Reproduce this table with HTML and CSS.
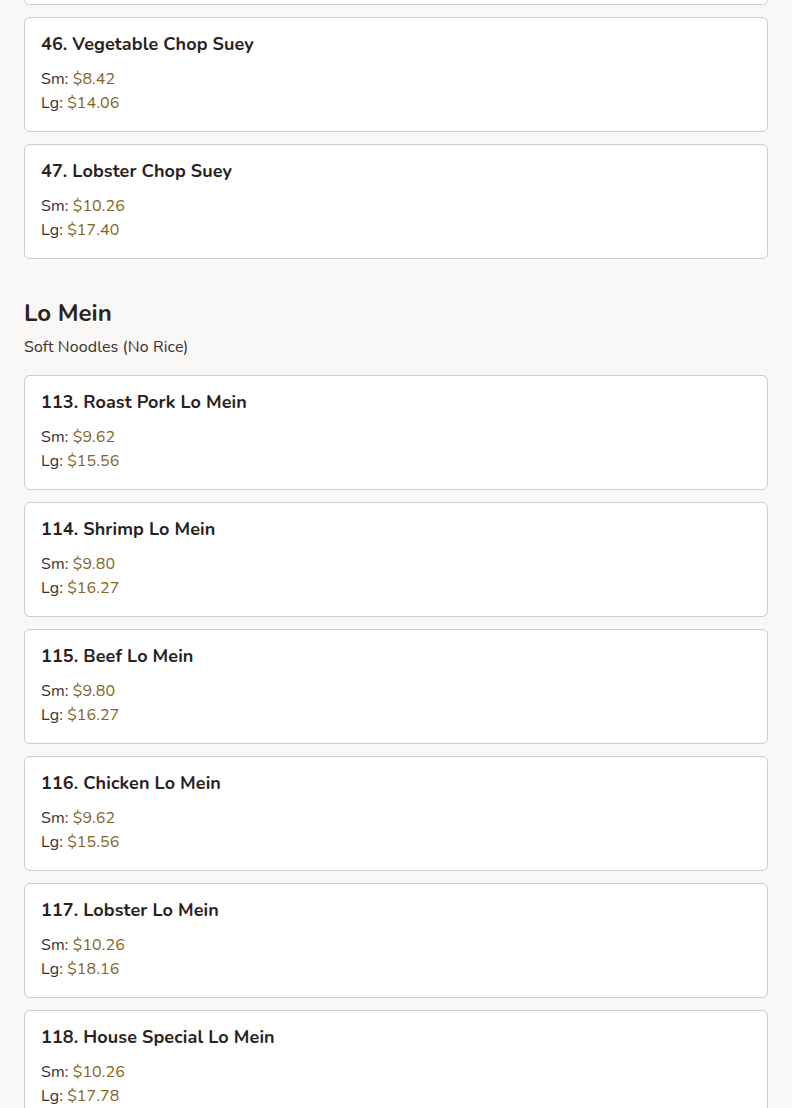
FILE: index.html
```html
<!DOCTYPE html>
<html lang="en">
<head>
<meta charset="utf-8">
<title>Menu</title>
<link rel="stylesheet" href="styles.css">
</head>
<body>
<main class="menu">
  <section class="section">
    <div class="card-tail"></div>
    <div class="cards">
      <article class="card">
        <h3 class="item-name">46. Vegetable Chop Suey</h3>
        <div class="price-row">Sm: <span class="price">$8.42</span></div>
        <div class="price-row">Lg: <span class="price">$14.06</span></div>
      </article>
      <article class="card">
        <h3 class="item-name">47. Lobster Chop Suey</h3>
        <div class="price-row">Sm: <span class="price">$10.26</span></div>
        <div class="price-row">Lg: <span class="price">$17.40</span></div>
      </article>
    </div>
  </section>
  <section class="section section-lomein">
    <h2 class="section-title">Lo Mein</h2>
    <p class="section-desc">Soft Noodles (No Rice)</p>
    <div class="cards">
      <article class="card">
        <h3 class="item-name">113. Roast Pork Lo Mein</h3>
        <div class="price-row">Sm: <span class="price">$9.62</span></div>
        <div class="price-row">Lg: <span class="price">$15.56</span></div>
      </article>
      <article class="card">
        <h3 class="item-name">114. Shrimp Lo Mein</h3>
        <div class="price-row">Sm: <span class="price">$9.80</span></div>
        <div class="price-row">Lg: <span class="price">$16.27</span></div>
      </article>
      <article class="card">
        <h3 class="item-name">115. Beef Lo Mein</h3>
        <div class="price-row">Sm: <span class="price">$9.80</span></div>
        <div class="price-row">Lg: <span class="price">$16.27</span></div>
      </article>
      <article class="card">
        <h3 class="item-name">116. Chicken Lo Mein</h3>
        <div class="price-row">Sm: <span class="price">$9.62</span></div>
        <div class="price-row">Lg: <span class="price">$15.56</span></div>
      </article>
      <article class="card">
        <h3 class="item-name">117. Lobster Lo Mein</h3>
        <div class="price-row">Sm: <span class="price">$10.26</span></div>
        <div class="price-row">Lg: <span class="price">$18.16</span></div>
      </article>
      <article class="card">
        <h3 class="item-name">118. House Special Lo Mein</h3>
        <div class="price-row">Sm: <span class="price">$10.26</span></div>
        <div class="price-row">Lg: <span class="price">$17.78</span></div>
      </article>
    </div>
  </section>
</main>
</body>
</html>
```

FILE: styles.css
```css
* { box-sizing: border-box; }

html, body {
  margin: 0;
  padding: 0;
  background: #f9f8f6;
}

body {
  font-family: "Nunito", "Lato", "Noto Sans", sans-serif;
  color: #2b2220;
  overflow: hidden;
}

.menu {
  padding: 0 24px;
}

.card-tail {
  height: 5px;
  background: #ffffff;
  border: 1px solid #cfcbc7;
  border-top: none;
  border-radius: 0 0 6px 6px;
  margin-bottom: 12px;
}

.cards {
  display: flex;
  flex-direction: column;
  gap: 12px;
}

.card {
  background: #ffffff;
  border: 1px solid #cfcbc7;
  border-radius: 6px;
  padding: 16px;
  height: 115px;
}

.item-name {
  margin: 0 0 13px;
  font-size: 18px;
  line-height: 20px;
  font-weight: 700;
  color: #2b2220;
  letter-spacing: 0.1px;
}

.price-row {
  font-size: 16px;
  line-height: 24px;
  color: #3a302c;
  letter-spacing: 0.1px;
}

.price {
  color: #85641f;
}

.section-lomein {
  padding-top: 38px;
}

.section-title {
  margin: 0;
  font-size: 24px;
  line-height: 32px;
  font-weight: 700;
  color: #2b2220;
}

.section-desc {
  margin: 6px 0 16px;
  font-size: 16px;
  line-height: 24px;
  color: #3a302c;
  letter-spacing: 0.1px;
}
```
